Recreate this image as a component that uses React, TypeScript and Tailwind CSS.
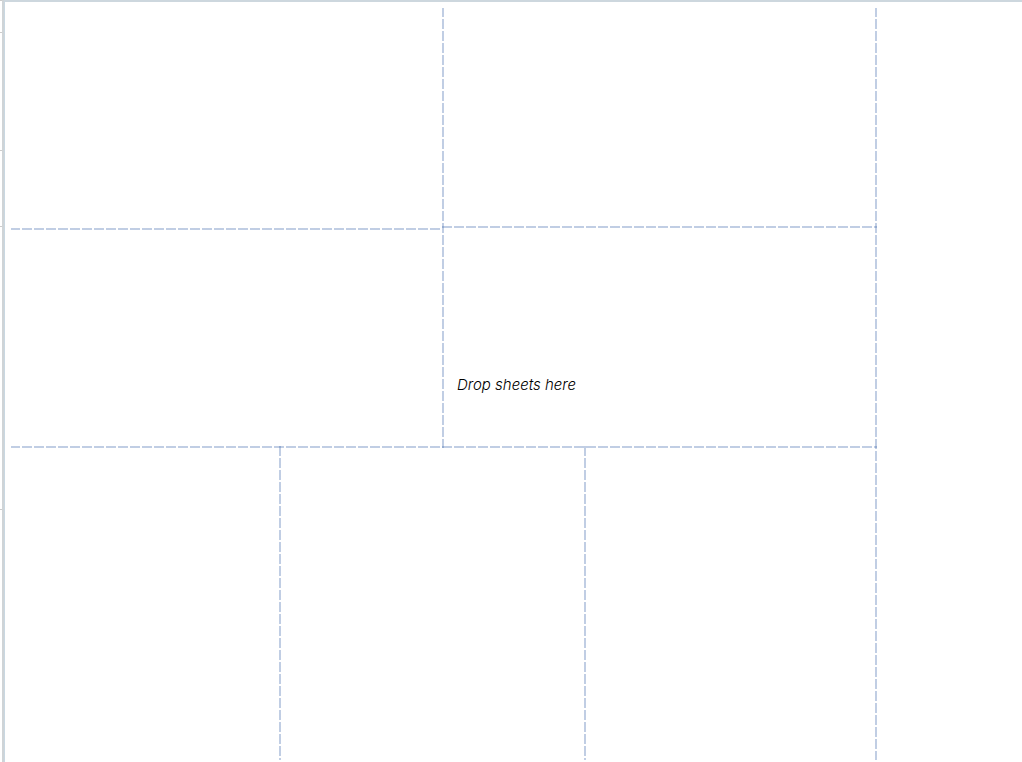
import React from 'react';

const dashX =
  'h-[2px] shrink-0 bg-[repeating-linear-gradient(to_right,rgba(48,92,165,0.3)_0px,rgba(48,92,165,0.3)_10px,transparent_10px,transparent_12px)]';
const dashY =
  'w-[2px] shrink-0 bg-[repeating-linear-gradient(to_bottom,rgba(48,92,165,0.3)_0px,rgba(48,92,165,0.3)_10px,transparent_10px,transparent_12px)]';

function Rule({ className = '' }: { className?: string }) {
  return <div aria-hidden="true" className={`${dashX} ${className}`} />;
}

function Divider({ className = '' }: { className?: string }) {
  return <div aria-hidden="true" className={`${dashY} ${className}`} />;
}

function RulerEdge() {
  return (
    <div aria-hidden="true" className="flex w-[2px] shrink-0 flex-col border-t border-[#cccccc]">
      <div className="h-8 border-b border-[#cccccc]" />
      <div className="h-[118px] border-b border-[#cccccc]" />
      <div className="h-[76px] border-b border-[#cccccc]" />
      <div className="h-[283px] border-b border-[#cccccc]" />
    </div>
  );
}

export default function App() {
  return (
    <div className="flex min-h-screen bg-white">
      <RulerEdge />
      <div aria-hidden="true" className="w-[2px] shrink-0 bg-[#cfd4d7]" />
      <main className="flex grow border-l border-t-2 border-l-[#c9d8e2] border-t-[#cdd7de] pl-1.5 pt-1.5">
        <div className="relative flex grow">
          <div className="flex w-[864px] shrink-0 flex-col pb-[2px]">
            <div className="flex h-[438px] shrink-0">
              <section className="w-[431px] pt-[220px]">
                <Rule className="mr-[2px] bg-[position:-1px_0]" />
              </section>
              <Divider className="-mb-[2px] bg-[position:0_-1px]" />
              <section className="-ml-[2px] grow pt-[218px]">
                <Rule className="-mr-[2px]" />
              </section>
            </div>
            <Rule className="-mr-[2px] bg-[position:-1px_0]" />
            <div className="-mt-[2px] flex grow">
              <section className="w-[268px]" />
              <Divider />
              <section className="w-[303px]" />
              <Divider />
              <section className="grow" />
            </div>
          </div>
          <Divider className="mb-[2px] bg-[position:0_-1px]" />
          <section className="grow" />
          <p className="pointer-events-none absolute inset-0 flex items-center justify-center font-['Inter','Open_Sans',sans-serif] text-[15px] font-light italic text-black">
            Drop sheets here
          </p>
        </div>
      </main>
    </div>
  );
}
